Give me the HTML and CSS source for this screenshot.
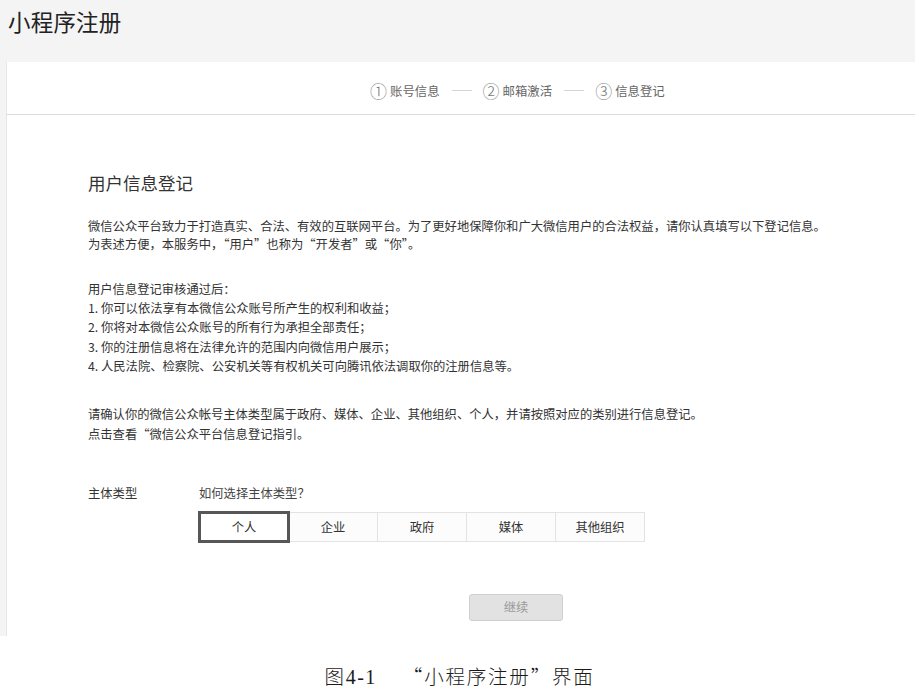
FILE: index.html
```html
<!DOCTYPE html>
<html lang="zh-CN">
<head>
<meta charset="utf-8">
<title>小程序注册</title>
<link rel="stylesheet" href="styles.css">
</head>
<body>
<div class="shot">
  <header class="page-head">
    <h1 class="page-title">小程序注册</h1>
  </header>
  <main class="card">
    <nav class="steps">
      <span class="step"><span class="num">①</span>账号信息</span>
      <span class="sep"></span>
      <span class="step"><span class="num">②</span>邮箱激活</span>
      <span class="sep"></span>
      <span class="step"><span class="num">③</span>信息登记</span>
    </nav>
    <section class="content">
      <h2 class="sec-title">用户信息登记</h2>
      <p class="intro">微信公众平台致力于打造真实、合法、有效的互联网平台。为了更好地保障你和广大微信用户的合法权益，请你认真填写以下登记信息。<br>为表述方便，本服务中，<span class="fw">“</span>用户<span class="fw">”</span>也称为<span class="fw">“</span>开发者<span class="fw">”</span>或<span class="fw">“</span>你<span class="fw">”</span>。</p>
      <p class="rules">用户信息登记审核通过后：<br>1. 你可以依法享有本微信公众账号所产生的权利和收益；<br>2. 你将对本微信公众账号的所有行为承担全部责任；<br>3. 你的注册信息将在法律允许的范围内向微信用户展示；<br>4. 人民法院、检察院、公安机关等有权机关可向腾讯依法调取你的注册信息等。</p>
      <p class="confirm">请确认你的微信公众帐号主体类型属于政府、媒体、企业、其他组织、个人，并请按照对应的类别进行信息登记。<br>点击查看<span class="fw">“</span>微信公众平台信息登记指引。</p>
      <div class="form-row">
        <div class="label">主体类型</div>
        <div class="field">
          <div class="hint">如何选择主体类型<span class="fw">？</span></div>
          <div class="seg">
            <span class="seg-item active">个人</span>
            <span class="seg-item">企业</span>
            <span class="seg-item">政府</span>
            <span class="seg-item">媒体</span>
            <span class="seg-item">其他组织</span>
          </div>
        </div>
      </div>
      <div class="actions"><button class="btn-next" disabled>继续</button></div>
    </section>
  </main>
</div>
<p class="caption"><span class="fig">图<span class="digits">4-1</span></span><span class="fw">“</span>小程序注册<span class="fw">”</span>界面</p>
</body>
</html>
```

FILE: styles.css
```css
* { box-sizing: border-box; }
html, body { margin: 0; padding: 0; background: #fff; }
body {
  width: 919px;
  font-family: "Noto Sans CJK SC", "Liberation Sans", sans-serif;
  color: #333;
}
.fw {
  font-family: "Noto Sans CJK SC", sans-serif;
  font-feature-settings: "fwid" 1;
}
.shot {
  width: 915px;
  background: #f4f4f4;
  padding-left: 6px;
}
.page-head { height: 62px; padding-top: 6px; }
.page-title {
  margin: 0 0 0 2px;
  font-size: 22.5px;
  line-height: 30px;
  font-weight: 400;
  color: #222;
  letter-spacing: 0.2px;
}
.card {
  background: #fff;
  border-left: 1px solid #e6e6e6;
  height: 574px;
}
.steps {
  height: 53px;
  border-bottom: 1px solid #dcdcdc;
  display: flex;
  align-items: center;
  padding-left: 363px;
  padding-top: 5px;
  font-size: 12.4px;
  color: #666;
}
.step { display: inline-flex; align-items: center; }
.num { font-size: 17px; margin-right: 3px; color: #777; font-weight: 300; }
.sep {
  width: 20px;
  height: 1px;
  background: #d4d4d4;
  margin: 0 11px 0 12px;
}
.content { padding-left: 81px; }
.sec-title {
  margin: 56px 0 0;
  font-size: 17.5px;
  line-height: 24px;
  font-weight: 400;
  color: #333;
}
.intro, .rules, .confirm {
  margin: 0;
  font-size: 12.3px;
  color: #333;
}
.intro { margin-top: 22px; line-height: 18px; }
.rules { margin-top: 27px; line-height: 19.2px; }
.confirm { margin-top: 28px; line-height: 20px; }
.form-row {
  margin-top: 40px;
  display: grid;
  grid-template-columns: 111px auto;
  font-size: 12.3px;
  line-height: 18px;
}
.hint { color: #444; }
.seg {
  margin-top: 10px;
  display: flex;
  width: 450px;
}
.seg-item {
  width: 90px;
  height: 30px;
  display: flex;
  align-items: center;
  justify-content: center;
  border: 1px solid #e3e3e3;
  margin-left: -1px;
  background: #fcfcfc;
  color: #333;
}
.seg-item:first-child { margin-left: 0; }
.seg-item.active {
  border: 2px solid #575757;
  box-shadow: 0 0 0 1px #575757;
  background: #fff;
  position: relative;
}
.actions { margin-top: 51px; padding-left: 381px; }
.btn-next {
  width: 94px;
  height: 27px;
  border: 1px solid #cfcfcf;
  border-radius: 3px;
  background: #e2e2e2;
  color: #9a9a9a;
  font-family: inherit;
  font-size: 12.3px;
  padding: 0;
}
.caption {
  margin: 28px 0 0;
  text-align: center;
  font-family: "Noto Sans CJK SC", sans-serif;
  font-weight: 300;
  font-size: 19.5px;
  line-height: 24px;
  letter-spacing: 1.8px;
  color: #1a1a1a;
  padding-left: 0;
}
.digits {
  font-family: "Liberation Serif", serif;
  font-size: 20px;
  letter-spacing: 1.5px;
}
.fig { margin-right: 26px; }
```
